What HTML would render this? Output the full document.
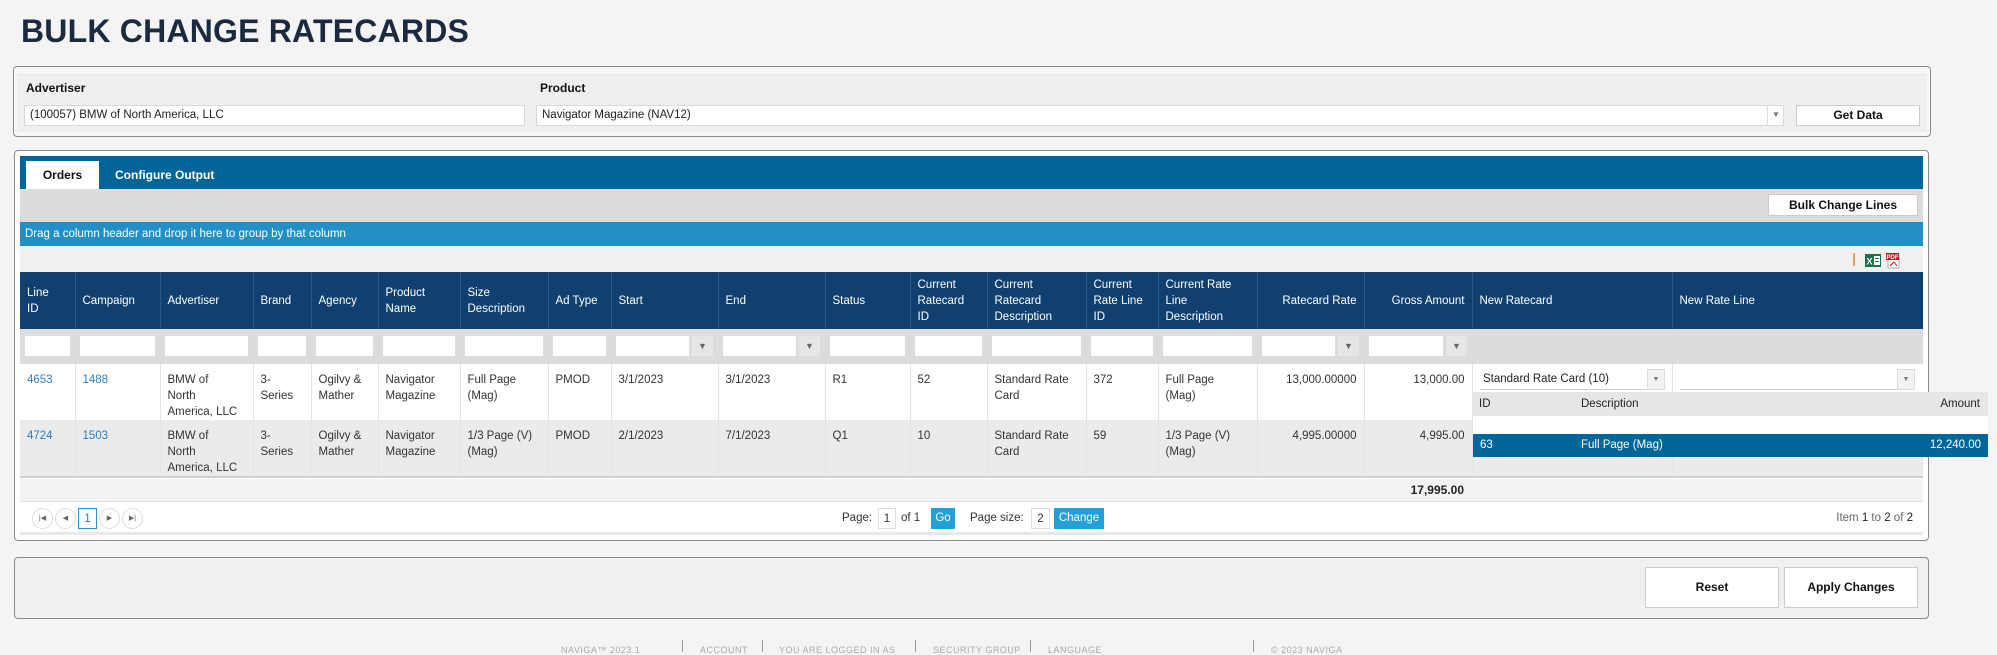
<!DOCTYPE html>
<html><head><meta charset="utf-8"><style>
*{box-sizing:border-box;margin:0;padding:0}
body{width:1997px;height:652px;overflow:hidden;background:#f4f4f4;font-family:"Liberation Sans",sans-serif;font-size:12px;color:#333;position:relative}
.abs{position:absolute}
h1{position:absolute;left:21px;top:13px;font-size:32px;font-weight:bold;color:#1b2a3e;letter-spacing:0.2px;white-space:nowrap}
.panel{position:absolute;border:1px solid #8a8a8a;border-radius:4px;background:#f7f7f7}
.lbl{position:absolute;font-weight:bold;font-size:12px;color:#111}
.inp{position:absolute;background:#fff;border:1px solid #d8d8d8;height:21px;padding:3px 5px;font-size:11.5px;color:#222}
.btn{position:absolute;background:#fff;border:1px solid #ccc;font-weight:bold;color:#111;text-align:center;font-size:12px}
table{border-collapse:collapse;table-layout:fixed;position:absolute;left:20px;top:272px;width:1903px}
th{background:#0f4070;color:#fff;font-weight:normal;text-align:left;padding:0 7px;height:57px;line-height:16px;border-left:1px solid #2b5a88;vertical-align:middle;font-size:11.5px;white-space:nowrap;overflow:hidden}
td{padding:8px 7px 0;vertical-align:top;line-height:16px;border-left:1px solid #e4e4e4;font-size:11.5px;white-space:nowrap;overflow:hidden}
tr.f td{background:#dcdcdc;height:35px;padding:7px 5px 0;border-left:none}
.fi{display:flex;gap:3px;height:20px}
.fi i{flex:1;background:#fff}
.fi b{width:21px;background:#e6e6e6;color:#666;font-size:9px;line-height:20px;text-align:center;font-weight:normal}
tr.r1 td{background:#fff;height:56px}
tr.r2 td{background:#ebebeb;height:57px;border-bottom:2px solid #cfcfcf}
.r{text-align:right}
a{color:#2a7fc0;text-decoration:none}
.ft{position:absolute;top:645px;font-size:9px;color:#aaa;letter-spacing:0.5px}
.sep{position:absolute;top:640px;width:1px;height:12px;background:#999}
.pg{position:absolute;top:508px;width:21px;height:21px;border:1px solid #ddd;border-radius:50%;background:#fff;font-size:7px;color:#666;text-align:center;line-height:19px}
</style></head><body>
<h1>BULK CHANGE RATECARDS</h1>

<div class="panel" style="left:13px;top:66px;width:1918px;height:71px;"></div>
<div class="abs" style="left:17px;top:73px;width:1910px;height:59px;background:#efefef"></div>
<div class="lbl" style="left:26px;top:81px">Advertiser</div>
<div class="lbl" style="left:540px;top:81px">Product</div>
<div class="inp" style="left:24px;top:105px;width:501px">(100057) BMW of North America, LLC</div>
<div class="inp" style="left:536px;top:105px;width:1248px">Navigator Magazine (NAV12)</div>
<div class="abs" style="left:1767px;top:106px;width:1px;height:19px;background:#ddd"></div>
<div class="abs" style="left:1772px;top:110px;font-size:8px;color:#777">▼</div>
<div class="btn" style="left:1796px;top:105px;width:124px;height:21px;line-height:19px">Get Data</div>

<div class="panel" style="left:14px;top:150px;width:1915px;height:391px;background:#fff"></div>
<div class="abs" style="left:20px;top:156px;width:1903px;height:33px;background:#02659a"></div>
<div class="abs" style="left:26px;top:161px;width:73px;height:28px;background:#fff;font-weight:bold;color:#111;text-align:center;line-height:28px">Orders</div>
<div class="abs" style="left:115px;top:161px;height:28px;color:#fff;font-weight:bold;line-height:28px">Configure Output</div>
<div class="abs" style="left:20px;top:189px;width:1903px;height:33px;background:#dcdcdc"></div>
<div class="btn" style="left:1768px;top:194px;width:150px;height:22px;line-height:20px">Bulk Change Lines</div>
<div class="abs" style="left:20px;top:222px;width:1903px;height:24px;background:#2290c6;color:#fff;line-height:24px;padding-left:5px;font-size:11.5px">Drag a column header and drop it here to group by that column</div>
<div class="abs" style="left:20px;top:246px;width:1903px;height:26px;background:#f0f0f0"></div>
<div class="abs" style="left:1853px;top:253px;width:2px;height:13px;background:#e0a060"></div>
<svg class="abs" style="left:1865px;top:253px" width="16" height="15"><rect x="0" y="1" width="16" height="13" fill="#1e7145"/><rect x="9" y="3" width="6" height="9" fill="#fff"/><rect x="10" y="5" width="4" height="1" fill="#1e7145"/><rect x="10" y="8" width="4" height="1" fill="#1e7145"/><text x="1.5" y="11.5" font-size="9" font-weight="bold" fill="#fff" font-family="Liberation Sans">X</text></svg>
<svg class="abs" style="left:1886px;top:252px" width="14" height="17"><rect x="2" y="3" width="11" height="13" fill="#fff" stroke="#999" stroke-width="0.8"/><rect x="0" y="1" width="13" height="7" fill="#c4161c"/><text x="0.5" y="7" font-size="6" font-weight="bold" fill="#fff" font-family="Liberation Sans">PDF</text><path d="M4 14 L8 10 L11 14" stroke="#c4161c" fill="none"/></svg>

<table>
<colgroup><col style="width:55px"><col style="width:85px"><col style="width:93px"><col style="width:58px"><col style="width:67px"><col style="width:82px"><col style="width:88px"><col style="width:63px"><col style="width:107px"><col style="width:107px"><col style="width:85px"><col style="width:77px"><col style="width:99px"><col style="width:72px"><col style="width:99px"><col style="width:107px"><col style="width:108px"><col style="width:200px"><col style="width:251px"></colgroup>
<tr><th style="border-left:none">Line<br>ID</th><th>Campaign</th><th>Advertiser</th><th>Brand</th><th>Agency</th><th>Product<br>Name</th><th>Size<br>Description</th><th>Ad Type</th><th>Start</th><th>End</th><th>Status</th><th>Current<br>Ratecard<br>ID</th><th>Current<br>Ratecard<br>Description</th><th>Current<br>Rate Line<br>ID</th><th>Current Rate<br>Line<br>Description</th><th class="r">Ratecard Rate</th><th class="r">Gross Amount</th><th>New Ratecard</th><th>New Rate Line</th></tr>
<tr class="f"><td><div class="fi"><i></i></div></td><td><div class="fi"><i></i></div></td><td><div class="fi"><i></i></div></td><td><div class="fi"><i></i></div></td><td><div class="fi"><i></i></div></td><td><div class="fi"><i></i></div></td><td><div class="fi"><i></i></div></td><td><div class="fi"><i></i></div></td><td><div class="fi"><i></i><b>▼</b></div></td><td><div class="fi"><i></i><b>▼</b></div></td><td><div class="fi"><i></i></div></td><td><div class="fi"><i></i></div></td><td><div class="fi"><i></i></div></td><td><div class="fi"><i></i></div></td><td><div class="fi"><i></i></div></td><td><div class="fi"><i></i><b>▼</b></div></td><td><div class="fi"><i></i><b>▼</b></div></td><td></td><td></td></tr>
<tr class="r1"><td style="border-left:none"><a>4653</a></td><td><a>1488</a></td><td>BMW of<br>North<br>America, LLC</td><td>3-<br>Series</td><td>Ogilvy &amp;<br>Mather</td><td>Navigator<br>Magazine</td><td>Full Page<br>(Mag)</td><td>PMOD</td><td>3/1/2023</td><td>3/1/2023</td><td>R1</td><td>52</td><td>Standard Rate<br>Card</td><td>372</td><td>Full Page<br>(Mag)</td><td class="r">13,000.00000</td><td class="r">13,000.00</td><td></td><td></td></tr>
<tr class="r2"><td style="border-left:none"><a>4724</a></td><td><a>1503</a></td><td>BMW of<br>North<br>America, LLC</td><td>3-<br>Series</td><td>Ogilvy &amp;<br>Mather</td><td>Navigator<br>Magazine</td><td>1/3 Page (V)<br>(Mag)</td><td>PMOD</td><td>2/1/2023</td><td>7/1/2023</td><td>Q1</td><td>10</td><td>Standard Rate<br>Card</td><td>59</td><td>1/3 Page (V)<br>(Mag)</td><td class="r">4,995.00000</td><td class="r">4,995.00</td><td></td><td></td></tr>
</table>
<div class="abs" style="left:20px;top:479px;width:1903px;height:23px;background:#f3f3f3;border-bottom:1px solid #e0e0e0"></div>
<div class="abs" style="left:1364px;top:479px;width:100px;height:23px;line-height:23px;text-align:right;font-weight:bold;color:#222">17,995.00</div>
<div class="abs" style="left:20px;top:502px;width:1903px;height:33px;background:#fff;border-bottom:3px solid #e8e8e8"></div>
<div class="pg" style="left:32px">|◀</div><div class="pg" style="left:55px">◀</div>
<div class="abs" style="left:78px;top:508px;width:19px;height:21px;border:1px solid #2a8fd0;text-align:center;line-height:19px;color:#2a7fc0">1</div>
<div class="pg" style="left:99px">▶</div><div class="pg" style="left:122px">▶|</div>
<div class="abs" style="left:842px;top:512px;font-size:11.5px">Page:</div>
<div class="abs" style="left:878px;top:508px;width:18px;height:21px;border:1px solid #ddd;text-align:center;line-height:21px;font-size:11.5px">1</div>
<div class="abs" style="left:901px;top:512px;font-size:11.5px">of 1</div>
<div class="abs" style="left:931px;top:508px;width:24px;height:21px;background:#22a0d8;color:#fff;text-align:center;line-height:20px;font-size:11.5px">Go</div>
<div class="abs" style="left:970px;top:512px;font-size:11.5px">Page size:</div>
<div class="abs" style="left:1031px;top:508px;width:19px;height:21px;border:1px solid #ddd;text-align:center;line-height:21px;font-size:11.5px">2</div>
<div class="abs" style="left:1054px;top:508px;width:50px;height:21px;background:#22a0d8;color:#fff;text-align:center;line-height:20px;font-size:11.5px">Change</div>
<div class="abs" style="left:1780px;top:512px;width:133px;text-align:right;font-size:11.5px;color:#666">Item <span style="color:#222">1</span> to <span style="color:#222">2</span> of <span style="color:#222">2</span></div>

<div class="abs" style="left:1480px;top:369px;width:185px;height:21px;background:#fff;border-bottom:1px solid #ccc;padding:4px 3px;font-size:11.5px;color:#222">Standard Rate Card (10)</div>
<div class="abs" style="left:1647px;top:369px;width:18px;height:21px;background:#f2f2f2;border:1px solid #ddd;font-size:7px;color:#777;text-align:center;line-height:19px">▼</div>
<div class="abs" style="left:1680px;top:369px;width:235px;height:21px;background:#fff;border-bottom:1px solid #ccc"></div>
<div class="abs" style="left:1897px;top:369px;width:18px;height:21px;background:#f2f2f2;border:1px solid #ddd;font-size:7px;color:#777;text-align:center;line-height:19px">▼</div>
<div class="abs" style="left:1473px;top:392px;width:515px;height:24px;background:#e6e6e6;font-size:11.5px;line-height:24px;color:#222">
<span class="abs" style="left:6px">ID</span><span class="abs" style="left:108px">Description</span><span class="abs" style="right:8px">Amount</span></div>
<div class="abs" style="left:1473px;top:416px;width:515px;height:18px;background:#fff"></div>
<div class="abs" style="left:1473px;top:434px;width:515px;height:23px;background:#02669a;color:#fff;font-size:11.5px;line-height:23px">
<span class="abs" style="left:7px">63</span><span class="abs" style="left:108px">Full Page (Mag)</span><span class="abs" style="right:7px">12,240.00</span></div>

<div class="panel" style="left:14px;top:557px;width:1915px;height:62px;background:#f0f0f0"></div>
<div class="btn" style="left:1645px;top:567px;width:134px;height:41px;line-height:39px">Reset</div>
<div class="btn" style="left:1784px;top:567px;width:134px;height:41px;line-height:39px">Apply Changes</div>

<div class="ft" style="left:561px">NAVIGA™ 2023.1</div><div class="sep" style="left:682px"></div>
<div class="ft" style="left:700px">ACCOUNT</div><div class="sep" style="left:762px"></div>
<div class="ft" style="left:779px">YOU ARE LOGGED IN AS</div><div class="sep" style="left:915px"></div>
<div class="ft" style="left:933px">SECURITY GROUP</div><div class="sep" style="left:1030px"></div>
<div class="ft" style="left:1048px">LANGUAGE</div><div class="sep" style="left:1253px"></div>
<div class="ft" style="left:1271px">© 2023 NAVIGA</div>
</body></html>
